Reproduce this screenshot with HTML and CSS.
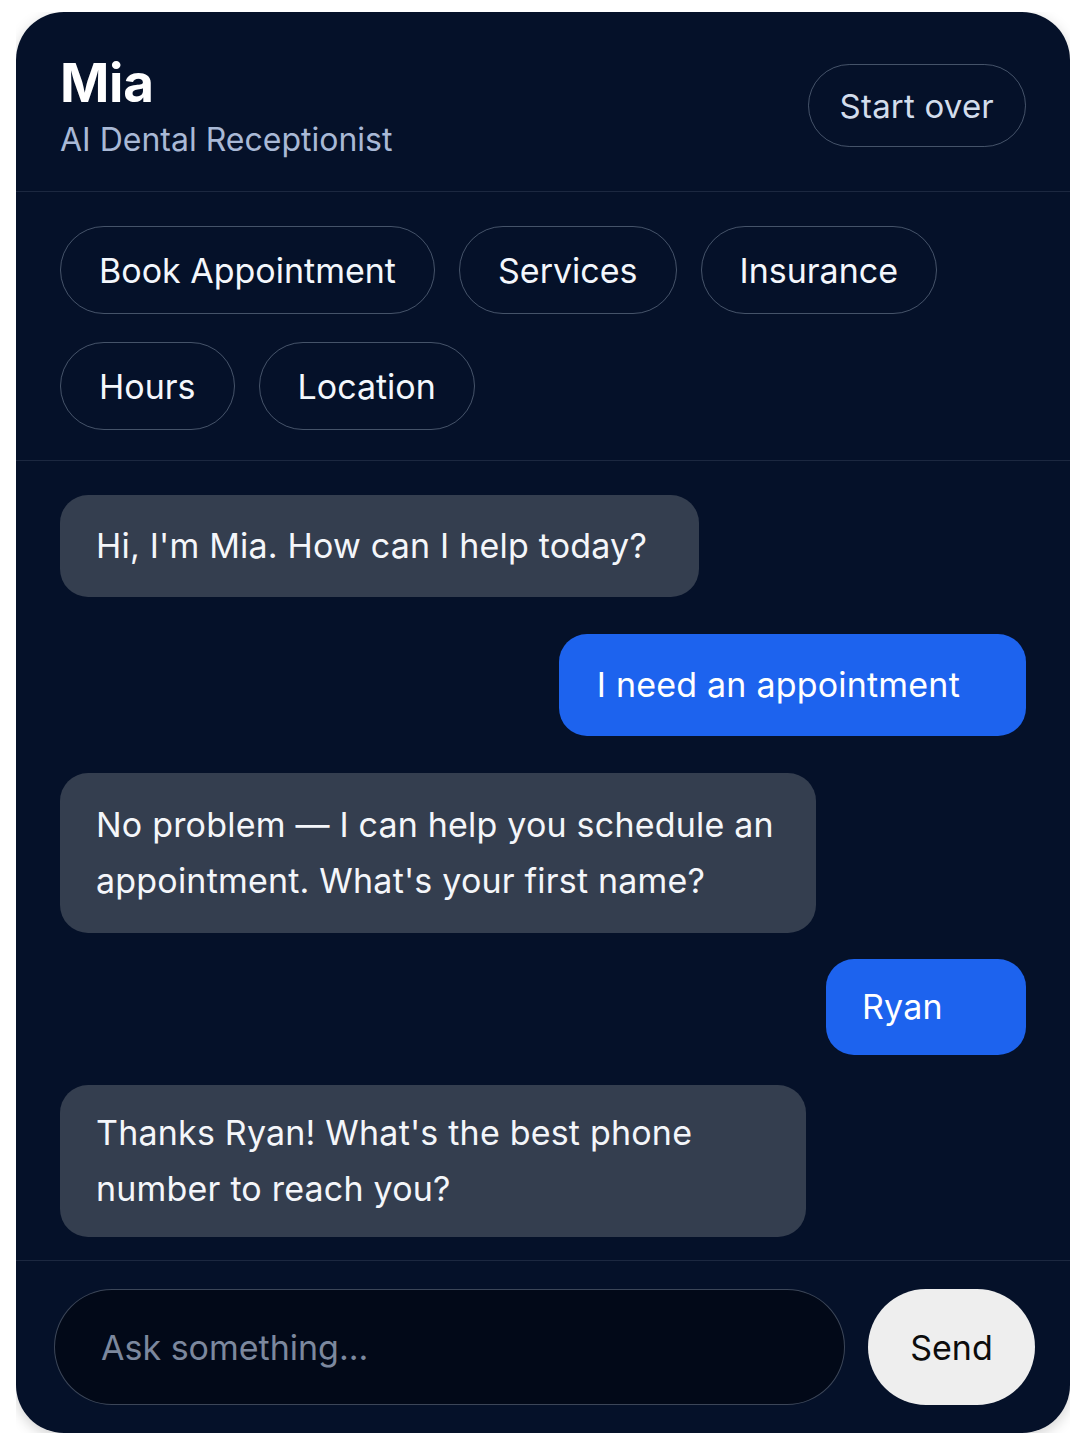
FILE: index.html
```html
<!DOCTYPE html>
<html lang="en">
<head>
<meta charset="utf-8">
<title>Mia - AI Dental Receptionist</title>
<link rel="stylesheet" href="styles.css">
</head>
<body>
<div class="card">
  <header class="header">
    <div class="title-block">
      <h1 class="name">Mia</h1>
      <div class="role">AI Dental Receptionist</div>
    </div>
    <button class="btn-outline restart">Start over</button>
  </header>
  <nav class="chips">
    <button class="chip">Book Appointment</button>
    <button class="chip">Services</button>
    <button class="chip">Insurance</button>
    <button class="chip">Hours</button>
    <button class="chip">Location</button>
  </nav>
  <main class="messages">
    <div class="msg bot">Hi, I'm Mia. How can I help today?</div>
    <div class="msg user">I need an appointment</div>
    <div class="msg bot wide">No problem — I can help you schedule an appointment. What's your first name?</div>
    <div class="msg user short">Ryan</div>
    <div class="msg bot wide last">Thanks Ryan! What's the best phone number to reach you?</div>
  </main>
  <footer class="composer">
    <div class="input">Ask something...</div>
    <button class="send">Send</button>
  </footer>
</div>
</body>
</html>
```
FILE: styles.css
```css
* { box-sizing: border-box; }
html, body { background: #ffffff; }
body {
  margin: 12px 16px 15px;
  font-family: Inter, "Noto Sans", "Liberation Sans", sans-serif;
  -webkit-font-smoothing: antialiased;
}
.card {
  height: 1421px;
  background: #051129;
  border-radius: 48px;
  box-shadow: 0 4px 14px rgba(0, 0, 0, 0.18);
  display: flex;
  flex-direction: column;
  overflow: hidden;
  color: #f1f5fb;
}
.header {
  display: flex;
  align-items: flex-start;
  justify-content: space-between;
  padding: 43px 44px 0;
  height: 180px;
  flex: none;
  border-bottom: 1.5px solid rgba(148, 163, 184, 0.16);
}
.name {
  margin: 0;
  font-size: 53px;
  font-weight: 700;
  line-height: 56px;
  color: #ffffff;
  letter-spacing: -0.3px;
}
.role {
  margin-top: 9px;
  font-size: 32px;
  line-height: 40px;
  color: #a9b9d6;
}
button { font-family: inherit; cursor: pointer; }
.btn-outline {
  margin-top: 9px;
  background: transparent;
  border: 1.5px solid rgba(148, 163, 184, 0.45);
  color: #d3ddec;
  border-radius: 999px;
  height: 83px;
  padding: 0 31px;
  font-size: 33px;
  letter-spacing: 0.2px;
}
.chips {
  display: flex;
  flex-wrap: wrap;
  gap: 28px 24px;
  padding: 34px 44px 30px;
  flex: none;
  border-bottom: 1.5px solid rgba(148, 163, 184, 0.16);
}
.chip {
  height: 88px;
  padding: 0 38px;
  background: transparent;
  border: 1.5px solid rgba(148, 163, 184, 0.45);
  border-radius: 999px;
  color: #f4f7fc;
  font-size: 34px;
}
.messages {
  flex: 1;
  display: flex;
  flex-direction: column;
  padding: 34px 44px 20px;
  border-bottom: 1.5px solid rgba(148, 163, 184, 0.16);
}
.msg {
  font-size: 34px;
  line-height: 56px;
  padding: 23px 52px 23px 36px;
  border-radius: 28px;
  letter-spacing: 0.2px;
  max-width: 760px;
}
.msg + .msg { margin-top: 37px; }
.msg + .short { margin-top: 26px; }
.short + .msg { margin-top: 30px; }
.bot {
  align-self: flex-start;
  background: #343e4f;
  color: #f4f6fa;
}
.user {
  align-self: flex-end;
  background: #1d63ee;
  color: #ffffff;
  padding-left: 38px;
  padding-right: 66px;
}
.user.short { min-width: 200px; padding: 20px 58px 20px 36px; }
.bot.wide { width: 756px; padding-right: 38px; padding-top: 24px; padding-bottom: 24px; }
.bot.last { width: 746px; padding-top: 20px; padding-bottom: 20px; }
.composer {
  display: flex;
  align-items: center;
  gap: 23px;
  padding: 28px 35px 28px 38px;
  flex: none;
}
.input {
  flex: 1;
  height: 116px;
  border-radius: 58px;
  background: #020918;
  border: 1.5px solid rgba(148, 163, 184, 0.4);
  color: #7c889e;
  font-size: 34px;
  display: flex;
  align-items: center;
  padding-left: 46px;
}
.send {
  width: 167px;
  height: 116px;
  border-radius: 999px;
  border: none;
  background: #eeeeee;
  color: #0c0c0c;
  font-size: 34px;
}
```
